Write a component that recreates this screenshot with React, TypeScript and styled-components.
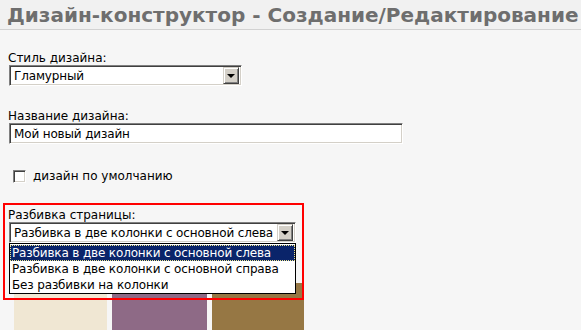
import styled, { createGlobalStyle } from "styled-components";

const GlobalStyle = createGlobalStyle`
  html, body {
    margin: 0;
    padding: 0;
    background: #f6f6f6;
    overflow: hidden;
  }
  body {
    font-family: "DejaVu Sans", Verdana, sans-serif;
    color: #000;
  }
`;

const Header = styled.div`
  height: 29px;
  padding-left: 7px;
  background: #f1f1f1;
  border-bottom: 1px solid #d2d2d2;
  display: flex;
  align-items: center;
`;

const Title = styled.h1`
  margin: 0;
  font-size: 20px;
  font-weight: bold;
  color: #6e6e6e;
  white-space: nowrap;
`;

const Content = styled.div`
  padding: 21px 0 0 8px;
`;

const Field = styled.div<{ $gap?: number }>`
  position: relative;
  margin-top: ${(p) => p.$gap ?? 0}px;
  display: flex;
  flex-direction: column;
  align-items: flex-start;
`;

const Label = styled.div`
  font-size: 12px;
  line-height: 14px;
  color: #000;
`;

const Sunken = styled.div<{ $width: number }>`
  width: ${(p) => p.$width}px;
  height: 21px;
  box-sizing: border-box;
  margin-left: 1px;
  background: #fff;
  border: 1px solid;
  border-color: #808080 #fff #fff #808080;
  box-shadow: inset 1px 1px 0 #404040, inset -1px -1px 0 #d4d0c8;
  display: flex;
  align-items: center;
  padding: 0 2px 0 4px;
  font-size: 12px;
  letter-spacing: -0.15px;
  white-space: nowrap;
`;

const SelectText = styled.span`
  flex: 1;
  min-width: 0;
  overflow: hidden;
`;

const DropButton = styled.span`
  flex: none;
  width: 16px;
  height: 17px;
  box-sizing: border-box;
  background: #d4d0c8;
  border: 1px solid;
  border-color: #d4d0c8 #404040 #404040 #d4d0c8;
  box-shadow: inset 1px 1px 0 #fff, inset -1px -1px 0 #808080;
  display: flex;
  align-items: center;
  justify-content: center;
  &::after {
    content: "";
    border-left: 4px solid transparent;
    border-right: 4px solid transparent;
    border-top: 4px solid #000;
    margin-top: 1px;
  }
`;

const CheckRow = styled.label`
  display: flex;
  align-items: center;
  gap: 7px;
  margin: 25px 0 0 5px;
  font-size: 12px;
`;

const Box = styled.span`
  width: 13px;
  height: 13px;
  box-sizing: border-box;
  background: #fff;
  border: 1px solid;
  border-color: #808080 #fff #fff #808080;
  box-shadow: inset 1px 1px 0 #404040, inset -1px -1px 0 #d4d0c8;
`;

const Highlight = styled.div`
  position: absolute;
  top: -5px;
  left: -5px;
  width: 301px;
  height: 97px;
  box-sizing: border-box;
  border: 2px solid #ff0000;
  z-index: 3;
  pointer-events: none;
`;

const Menu = styled.ul`
  position: absolute;
  top: 35px;
  left: 1px;
  width: 287px;
  box-sizing: border-box;
  margin: 0;
  padding: 1px 0 0;
  list-style: none;
  background: #fff;
  border: 1px solid #000;
  z-index: 2;
`;

const Option = styled.li<{ $active?: boolean }>`
  height: 16px;
  line-height: 14px;
  box-sizing: border-box;
  padding-left: 1px;
  font-size: 12px;
  letter-spacing: -0.15px;
  white-space: nowrap;
  color: ${(p) => (p.$active ? "#fff" : "#000")};
  background: ${(p) => (p.$active ? "#0a246a" : "transparent")};
  border: 1px dotted ${(p) => (p.$active ? "#f0e68c" : "transparent")};
`;

const Swatches = styled.div`
  display: flex;
  gap: 5px;
  margin: 40px 0 0 6px;
`;

const Swatch = styled.div<{ $color: string; $width: number }>`
  width: ${(p) => p.$width}px;
  height: 60px;
  background: ${(p) => p.$color};
`;

const layouts = [
  "Разбивка в две колонки с основной слева",
  "Разбивка в две колонки с основной справа",
  "Без разбивки на колонки",
];

export default function App() {
  return (
    <>
      <GlobalStyle />
      <Header>
        <Title>Дизайн-конструктор - Создание/Редактирование</Title>
      </Header>
      <Content>
        <Field>
          <Label>Стиль дизайна:</Label>
          <Sunken $width={233}>
            <SelectText>Гламурный</SelectText>
            <DropButton />
          </Sunken>
        </Field>
        <Field $gap={23}>
          <Label>Название дизайна:</Label>
          <Sunken $width={394}>Мой новый дизайн</Sunken>
        </Field>
        <CheckRow>
          <Box />
          дизайн по умолчанию
        </CheckRow>
        <Field $gap={25}>
          <Highlight />
          <Label>Разбивка страницы:</Label>
          <Sunken $width={287}>
            <SelectText>{layouts[0]}</SelectText>
            <DropButton />
          </Sunken>
          <Menu>
            {layouts.map((l, i) => (
              <Option key={l} $active={i === 0}>
                {l}
              </Option>
            ))}
          </Menu>
        </Field>
        <Swatches>
          <Swatch $color="#f0e7d3" $width={93} />
          <Swatch $color="#8e6a86" $width={95} />
          <Swatch $color="#967744" $width={92} />
        </Swatches>
      </Content>
    </>
  );
}
